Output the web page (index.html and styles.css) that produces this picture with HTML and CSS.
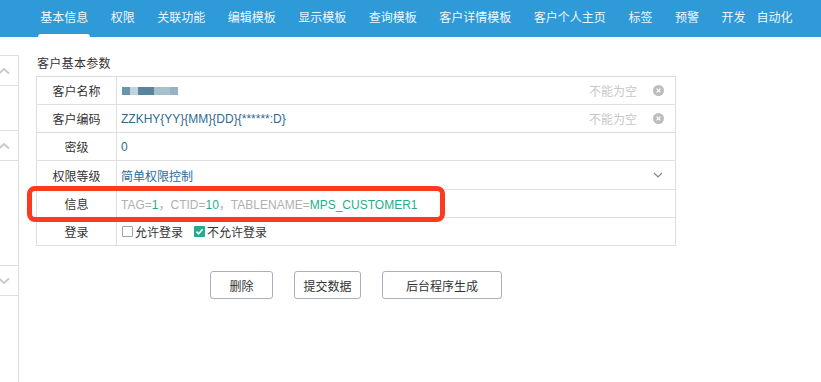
FILE: index.html
```html
<!DOCTYPE html>
<html lang="zh-CN">
<head>
  <meta charset="UTF-8" />
  <meta name="viewport" content="width=device-width, initial-scale=1.0"/>
  <title>客户基本参数</title>
  <link rel="stylesheet" href="styles.css">
</head>
<body>

  <div class="topnav">
    <a class="tab active">基本信息</a>
    <a class="tab">权限</a>
    <a class="tab">关联功能</a>
    <a class="tab">编辑模板</a>
    <a class="tab">显示模板</a>
    <a class="tab">查询模板</a>
    <a class="tab">客户详情模板</a>
    <a class="tab">客户个人主页</a>
    <a class="tab">标签</a>
    <a class="tab">预警</a>
    <a class="tab">开发<span class="sub">自动化</span></a>
  </div>

  <div class="page">
    <div class="sidebar">
      <div class="seg short">
        <svg width="12" height="8" viewBox="0 0 12 8"><path d="M1 6.5 L6 2 L11 6.5" fill="none" stroke="#c9c9c9" stroke-width="2"/></svg>
      </div>
      <div class="seg blank1"></div>
      <div class="seg short">
        <svg width="12" height="8" viewBox="0 0 12 8"><path d="M1 6.5 L6 2 L11 6.5" fill="none" stroke="#c9c9c9" stroke-width="2"/></svg>
      </div>
      <div class="seg blank2"></div>
      <div class="seg short">
        <svg width="12" height="8" viewBox="0 0 12 8"><path d="M1 1.5 L6 6 L11 1.5" fill="none" stroke="#c9c9c9" stroke-width="2"/></svg>
      </div>
      <div class="seg rest"></div>
    </div>

    <div class="main">
      <div class="section-title">客户基本参数</div>

      <div class="form">
        <div class="row">
          <div class="label">客户名称</div>
          <div class="value">
            <span class="blur">
              <i class="b1"></i><i class="b2"></i><i class="b3"></i><i class="b4"></i><i class="b5"></i>
            </span>
          </div>
          <div class="hint">不能为空</div>
          <svg class="clear" width="11" height="11" viewBox="0 0 11 11"><circle cx="5.5" cy="5.5" r="5.5" fill="#bdbdbd"/><path d="M3.6 3.6 L7.4 7.4 M7.4 3.6 L3.6 7.4" stroke="#fff" stroke-width="1.2"/></svg>
        </div>
        <div class="row">
          <div class="label">客户编码</div>
          <div class="value">ZZKHY{YY}{MM}{DD}{******:D}</div>
          <div class="hint">不能为空</div>
          <svg class="clear" width="11" height="11" viewBox="0 0 11 11"><circle cx="5.5" cy="5.5" r="5.5" fill="#bdbdbd"/><path d="M3.6 3.6 L7.4 7.4 M7.4 3.6 L3.6 7.4" stroke="#fff" stroke-width="1.2"/></svg>
        </div>
        <div class="row">
          <div class="label">密级</div>
          <div class="value">0</div>
        </div>
        <div class="row tall">
          <div class="label">权限等级</div>
          <div class="value">简单权限控制</div>
          <svg class="caret" width="10" height="6" viewBox="0 0 10 6"><path d="M1 1 L5 5 L9 1" fill="none" stroke="#888" stroke-width="1.2"/></svg>
        </div>
        <div class="row">
          <div class="label">信息</div>
          <div class="value info">TAG=<em>1</em>，CTID=<em>10</em>，TABLENAME=<em>MPS_CUSTOMER1</em></div>
        </div>
        <div class="row">
          <div class="label">登录</div>
          <div class="value checks">
            <label class="check"><span class="box"></span>允许登录</label>
            <label class="check"><span class="box on"><svg width="11" height="11" viewBox="0 0 11 11"><path d="M2.5 5.6 L4.6 7.8 L8.6 3.2" fill="none" stroke="#fff" stroke-width="1.6"/></svg></span>不允许登录</label>
          </div>
        </div>

        <div class="highlight"></div>
      </div>

      <div class="actions">
        <button class="btn w-del">删除</button>
        <button class="btn w-submit">提交数据</button>
        <button class="btn w-gen">后台程序生成</button>
      </div>
    </div>
  </div>

</body>
</html>
```

FILE: styles.css
```css
* {
  box-sizing: border-box;
}

body {
  margin: 0;
  font-family: "Liberation Sans", "Noto Sans CJK SC", sans-serif;
  font-size: 12px;
  color: #333;
  background: #fff;
  height: 382px;
  overflow: hidden;
}

.topnav {
  height: 37px;
  background: #2e9ad8;
  display: flex;
  padding-left: 29px;
}

.tab {
  position: relative;
  padding: 0 11.25px;
  line-height: 37px;
  color: #eef6fc;
  white-space: nowrap;
}

.tab .sub {
  margin-left: 11px;
}

.tab.active::after {
  content: "";
  position: absolute;
  left: 9px;
  right: 10px;
  bottom: 0;
  height: 3px;
  background: #fff;
  border-radius: 3px 3px 0 0;
}

.page {
  display: flex;
}

.sidebar {
  width: 19px;
  margin-top: 18px;
  border-right: 1px solid #dedede;
  display: flex;
  flex-direction: column;
  overflow: hidden;
  height: 327px;
}

.seg {
  border-top: 1px solid #dedede;
}

.seg.short {
  height: 30px;
  display: flex;
  align-items: center;
}

.seg.short svg {
  margin-left: -2px;
}

.seg.blank1 {
  height: 45px;
}

.seg.blank2 {
  height: 105px;
}

.seg.rest {
  flex: 1;
}

.main {
  padding: 19px 0 0 17px;
}

.section-title {
  line-height: 16px;
  padding-left: 1px;
  letter-spacing: 0.3px;
}

.form {
  position: relative;
  width: 640px;
  margin-top: 4px;
  border: 1px solid #dedede;
  border-bottom: none;
}

.row {
  height: 28px;
  display: flex;
  align-items: center;
  border-bottom: 1px solid #dedede;
}

.row.tall {
  height: 29px;
}

.label {
  width: 80px;
  height: 100%;
  border-right: 1px solid #dedede;
  display: flex;
  align-items: center;
  justify-content: center;
  color: #333;
}

.value {
  flex: 1;
  padding-left: 4px;
  color: #2f6a95;
  white-space: nowrap;
}

.value.info {
  color: #b0b0b0;
}

.value.info em {
  font-style: normal;
  color: #1fae8e;
}

.blur {
  display: inline-flex;
  vertical-align: middle;
  margin-left: 1px;
}

.blur i {
  display: block;
  height: 8px;
}

.b1 { width: 8px; background: #6a93ad; }
.b2 { width: 8px; background: #c3d3dd; }
.b3 { width: 16px; background: #57859f; }
.b4 { width: 16px; background: #a8bfce; }
.b5 { width: 8px; background: #95b2c4; }

.hint {
  color: #c8c8c8;
  margin-right: 16px;
}

.clear {
  margin-right: 11px;
}

.caret {
  margin-right: 12px;
}

.checks {
  display: flex;
  gap: 10px;
  color: #333;
}

.check {
  display: flex;
  align-items: center;
}

.box {
  width: 11px;
  height: 11px;
  margin: 0 2px 0 1px;
  border: 1px solid #a0a0a0;
  border-radius: 1px;
  background: #fff;
}

.box.on {
  border: none;
  background: #22ab8d;
  display: flex;
}

.highlight {
  position: absolute;
  left: -10px;
  top: 109px;
  width: 418px;
  height: 36px;
  border: 5px solid #fb3a1f;
  border-radius: 8px;
  pointer-events: none;
}

.actions {
  display: flex;
  gap: 21px;
  margin: 25px 0 0 174px;
}

.btn {
  height: 28px;
  font-family: inherit;
  font-size: 12px;
  color: #333;
  background: #fff;
  border: 1px solid #a9b0ba;
  border-radius: 3px;
  cursor: pointer;
}

.w-del { width: 63px; }
.w-submit { width: 67px; }
.w-gen { width: 120px; }
```
